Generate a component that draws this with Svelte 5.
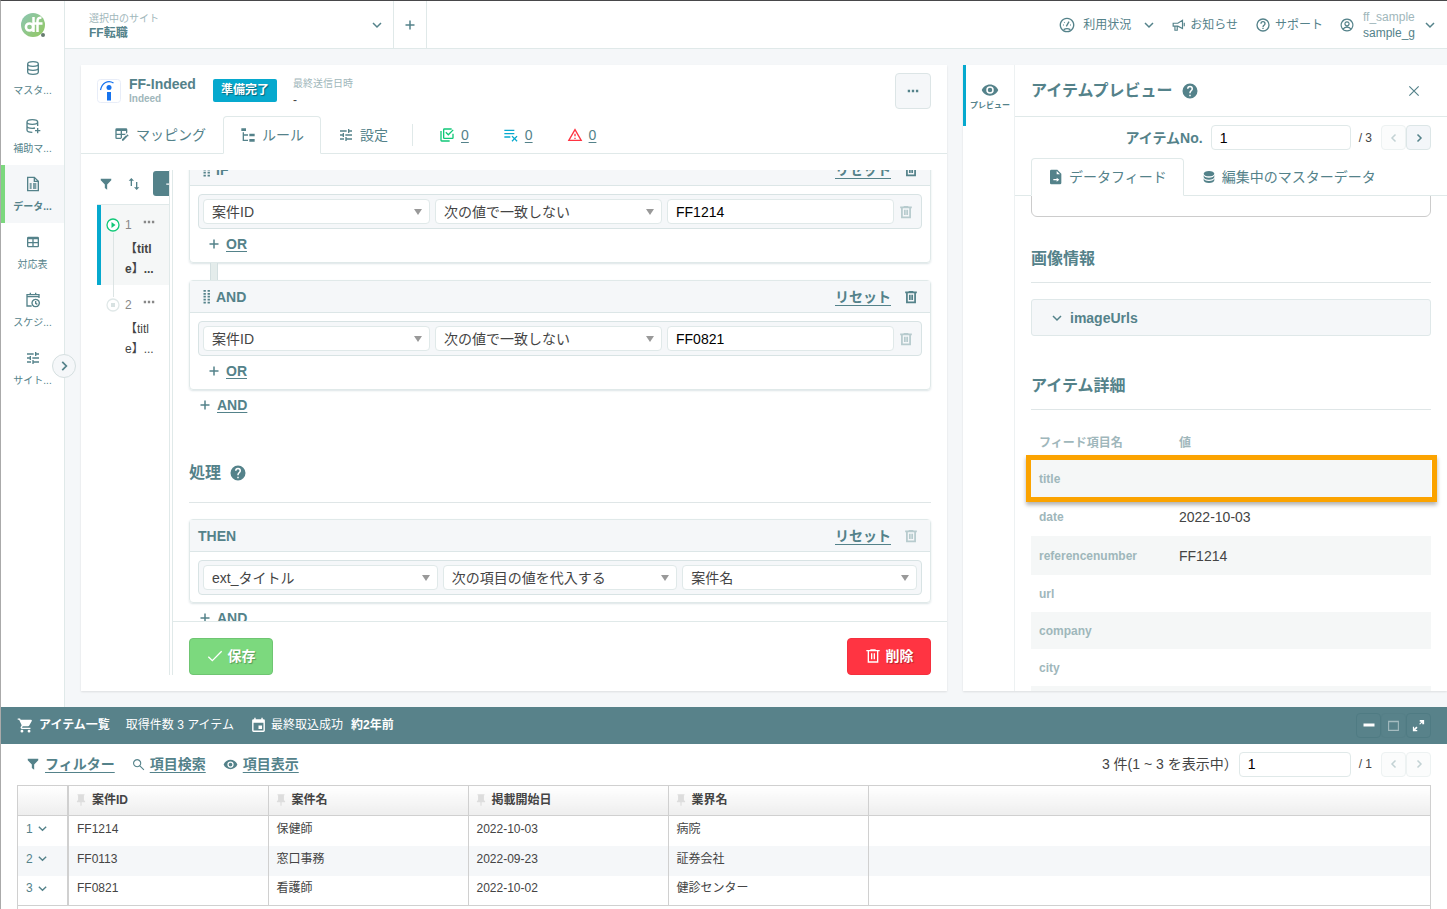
<script lang="ts">
  import { onMount } from "svelte";

  // filled 24x24 icons
  const filled: Record<string, string> = {
    database:
      "M12 3C7.58 3 4 4.79 4 7s3.58 4 8 4 8-1.79 8-4-3.58-4-8-4M4 9v3c0 2.21 3.58 4 8 4s8-1.79 8-4V9c0 2.21-3.58 4-8 4s-8-1.79-8-4m0 5v3c0 2.21 3.58 4 8 4s8-1.79 8-4v-3c0 2.21-3.58 4-8 4s-8-1.79-8-4z",
    eye: "M12 9a3 3 0 1 0 0 6 3 3 0 0 0 0-6m0 8a5 5 0 1 1 0-10 5 5 0 0 1 0 10m0-12.500C7 4.500 2.730 7.610 1 12c1.730 4.390 6 7.500 11 7.500s9.270-3.110 11-7.500C21.270 7.610 17 4.500 12 4.500z",
    tune: "M3 17v2h6v-2H3M3 5v2h10V5H3m10 16v-2h8v-2h-8v-2h-2v6h2M7 9v2H3v2h4v2h2V9H7m14 4v-2H11v2h10m-6-4h2V7h4V5h-4V3h-2v6z",
    filter: "M3 3h18v2.500L14 13v9l-4-3v-6L3 5.500z",
    help: "M15.070 11.250l-.9.920C13.450 12.890 13 13.500 13 15h-2v-.5c0-1.110.45-2.110 1.170-2.830l1.240-1.260C13.780 10.050 14 9.550 14 9a2 2 0 1 0-4 0H8a4 4 0 1 1 8 0c0 .88-.36 1.670-.93 2.250M13 19h-2v-2h2M12 2a10 10 0 1 0 0 20 10 10 0 0 0 0-20z",
    helpOutline:
      "M11 18h2v-2h-2v2m1-16a10 10 0 1 0 0 20 10 10 0 0 0 0-20m0 18a8 8 0 1 1 0-16 8 8 0 0 1 0 16m0-14a4 4 0 0 0-4 4h2a2 2 0 1 1 4 0c0 2-3 1.750-3 5h2c0-2.250 3-2.500 3-5a4 4 0 0 0-4-4z",
    cart: "M17 18a2 2 0 1 0 0 4 2 2 0 0 0 0-4M1 2v2h2l3.600 7.590-1.360 2.450A2 2 0 0 0 7 17h12v-2H7.420a.25.25 0 0 1-.22-.37L8.100 13h7.450c.75 0 1.410-.42 1.750-1.030l3.580-6.470A1 1 0 0 0 20 4H5.210l-.94-2M7 18a2 2 0 1 0 0 4 2 2 0 0 0 0-4z",
    calendar:
      "M19 19H5V8h14M16 1v2H8V1H6v2H5a2 2 0 0 0-2 2v14a2 2 0 0 0 2 2h14a2 2 0 0 0 2-2V5a2 2 0 0 0-2-2h-1V1m-1 11h-5v5h5v-5z",
    tree: "M2 2h7v4H2zM14 10h8v4h-8zM14 18h8v4h-8zM4 8h2v3h6v2H6v6h6v2H4z",
    alert: "M12 2L1 21h22M12 6l7.530 13H4.470M11 10v4h2v-4m-2 6v2h2v-2",
    listRemove:
      "M2 4v2h15V4H2m0 5v2h15V9H2m0 5v2h9v-2H2m12.200-1l-1.400 1.400 3.100 3.100-3.100 3.100 1.400 1.400 3.100-3.100 3.100 3.100 1.400-1.400-3.100-3.100 3.100-3.100L20.400 13l-3.100 3.100z",
    checks:
      "M20 16v-6h2v6a2 2 0 0 1-2 2H8a2 2 0 0 1-2-2V4a2 2 0 0 1 2-2h11v2H8v12h12M10.900 7.100l3.100 3.100 6.600-6.600L22 5l-8 8-4.500-4.500 1.400-1.400M16 20v2H4a2 2 0 0 1-2-2V6h2v14h12z",
    swap: "M8 3L4 7h3v8h2V7h3M17 17V9h-2v8h-3l4 4 4-4h-3z",
    pin: "M17 12V4h1V2H6v2h1v8l-2 2v2h6v6h2v-6h6v-2z",
    tableEdit:
      "M21.700 13.350l-1 1-2.050-2.050 1-1a.55.55 0 0 1 .77 0l1.280 1.280c.21.21.21.56 0 .77M12 18.420v2.080h2.060l6.060-6.080-2.050-2.050L12 18.420M4 2h14a2 2 0 0 1 2 2v4.170L16.170 12H12v4.170L10.170 18H4a2 2 0 0 1-2-2V4a2 2 0 0 1 2-2m0 4v4h6V6H4m8 0v4h6V6h-6m-8 6v4h6v-4H4z",
    table:
      "M5 4h14a2 2 0 0 1 2 2v12a2 2 0 0 1-2 2H5a2 2 0 0 1-2-2V6a2 2 0 0 1 2-2m0 4v4h6V8H5m8 0v4h6V8h-6m-8 6v4h6v-4H5m8 0v4h6v-4h-6z",
    expand:
      "M10 21v-2H7l3.500-3.500-2-2L5 17v-3H3v7h7m4.500-10.500l3.500-3.500v3h3V3h-7v3h2.500l-3.500 3.500z",
    fileMove: "M5 1h9l6 6v14a2 2 0 0 1-2 2H5a2 2 0 0 1-2-2V3a2 2 0 0 1 2-2m8 2v5h5zM8 15v2h5v2l4-3-4-3v2z",
    dots: "M3 10h4v4H3zM10 10h4v4h-4zM17 10h4v4h-4z",
    minimize: "M1 9h22v6H1z",
    grip: "M6 0h4v3H6zM13 0h4v3h-4zM6 5h4v3H6zM13 5h4v3h-4zM6 10h4v3H6zM13 10h4v3h-4zM6 15h4v3H6zM13 15h4v3h-4zM6 20h4v3H6zM13 20h4v3h-4z",
  };

  // stroked 24x24 icons
  const stroked: Record<string, string> = {
    databaseLine:
      "M4 6c0-2 3.500-3.500 8-3.500S20 4 20 6s-3.500 3.500-8 3.500S4 8 4 6zv12c0 2 3.500 3.500 8 3.500s8-1.500 8-3.500V6M4 12c0 2 3.500 3.500 8 3.500s8-1.500 8-3.500",
    databasePlus:
      "M3 6c0-2 3.500-3.500 8-3.500S19 4 19 6s-3.500 3.500-8 3.500S3 8 3 6zv12c0 2 3.500 3.500 8 3.500M19 6v6M3 12c0 2 3.500 3.500 8 3.500 1.500 0 3-.2 4-.5M19 15v8M15 19h8",
    fileTable: "M4 2h10l6 6v14H4zM14 2v6h6M7 12h3M12 12h5M7 15h3M12 15h5M7 18h3M12 18h5",
    calendarClock: "M10 21H3V4h18v5M3 7h18M8 1v4M16 1v4M16 11a5.500 5.500 0 1 0 .01 0zM16 13.500V17l2.500 1.500",
    down: "M4 8l8 8 8-8",
    left: "M15 5l-7 7 7 7",
    right: "M9 5l7 7-7 7",
    plus: "M12 3v18M3 12h18",
    close: "M4 4l16 16M20 4L4 20",
    check: "M2 13l6 6L22 5",
    search: "M9.500 3a6.500 6.500 0 1 0 .01 0zM14.500 14.500L22 22",
    trash: "M2 4h20M8 3h8M5 4v17h14V4M10 8v9M14 8v9",
    gauge: "M12 2a10 10 0 1 0 .01 0zM7 19c3-2 7-2 10 0M11 14l4-7M6 12h1M8 8l.5.5M17 12h1",
    horn: "M2 9h8l8-5v14l-8-4H2zM5 15v6h4v-6M21 8v6",
    user: "M12 2a10 10 0 1 0 .01 0zM12 6.500a3.500 3.500 0 1 0 .01 0zM5.500 18.500c3-4 10-4 13 0",
    maximize: "M3 4h18v17H3zM3 5h18",
  };

  const nav = [
    { icon: "databaseLine", label: "マスタ..." },
    { icon: "databasePlus", label: "補助マ..." },
    { icon: "fileTable", label: "データ...", active: true },
    { icon: "table", label: "対応表" },
    { icon: "calendarClock", label: "スケジ..." },
    { icon: "tune", label: "サイト..." },
  ];

  const tabs = [
    { icon: "tableEdit", label: "マッピング" },
    { icon: "tree", label: "ルール", active: true },
    { icon: "tune", label: "設定" },
  ];

  const counters = [
    { icon: "checks", kind: "ok", count: 0 },
    { icon: "listRemove", kind: "info", count: 0 },
    { icon: "alert", kind: "error", count: 0 },
  ];

  let conditions = $state([
    { id: "if", label: "IF", value: "FF1214" },
    { id: "and", label: "AND", value: "FF0821" },
  ]);

  const actions = [
    { label: "対象項目", value: "ext_タイトル" },
    { label: "処理方法", value: "次の項目の値を代入する" },
    { label: "代入元", value: "案件名" },
  ];

  const details = [
    { name: "title", value: "", marked: true },
    { name: "date", value: "2022-10-03" },
    { name: "referencenumber", value: "FF1214" },
    { name: "url", value: "" },
    { name: "company", value: "" },
    { name: "city", value: "" },
    { name: "", value: "" },
  ];

  const columns = ["案件ID", "案件名", "掲載開始日", "業界名"];
  const items = [
    ["FF1214", "保健師", "2022-10-03", "病院"],
    ["FF0113", "窓口事務", "2022-09-23", "証券会社"],
    ["FF0821", "看護師", "2022-10-02", "健診センター"],
  ];

  let itemNo = $state("1");
  let page = $state("1");
  let editor: HTMLElement;
  let preview: HTMLElement;

  onMount(() => {
    editor.scrollTop = 17;
    preview.scrollTop = 60;
  });
</script>

{#snippet icon(name: string, size = 16, weight = size < 14 ? 3 : 2)}
  <svg class="icon" width={size} height={size} viewBox="0 0 24 24" aria-hidden="true">
    {#if filled[name]}
      <path d={filled[name]} fill="currentColor" fill-rule="evenodd" />
    {:else}
      <path d={stroked[name]} fill="none" stroke="currentColor" stroke-width={weight} />
    {/if}
  </svg>
{/snippet}

{#snippet dropdown(label: string, value: string)}
  <span class="select">
    <select aria-label={label}><option>{value}</option></select>
  </span>
{/snippet}

<div class="app">
  <div class="upper">
    <nav class="sidebar">
      <a class="logo" href="#home" aria-label="ホーム">
        <svg width="26" height="26" viewBox="0 0 26 26">
          <defs>
            <linearGradient id="brand" x1="0" y1="0" x2="1" y2="1">
              <stop offset="0" stop-color="#8cc6b4" />
              <stop offset="1" stop-color="#93c860" />
            </linearGradient>
          </defs>
          <circle cx="12" cy="12" r="12" fill="url(#brand)" />
          <g fill="none" stroke="#fff" stroke-width="2.500">
            <circle cx="8.500" cy="14" r="3.600" />
            <path d="M12.500 4v15M16.500 19V8c0-2.500 1.500-3.500 4-3.200M12.500 10.500h9" />
          </g>
          <circle cx="22" cy="22" r="2" fill="#667b70" />
        </svg>
      </a>
      {#each nav as item}
        <a class="nav-item" class:active={item.active} href="#nav">
          {@render icon(item.icon, 16)}
          <span>{item.label}</span>
        </a>
      {/each}
      <button class="toggle" aria-label="メニューを開く">{@render icon("right", 14, 3)}</button>
    </nav>

    <div class="main">
      <header class="topbar">
        <button class="site">
          <span class="site-name">
            <small>選択中のサイト</small>
            <strong>FF転職</strong>
          </span>
          {@render icon("down", 12)}
        </button>
        <button class="add-site" aria-label="サイトを追加">{@render icon("plus", 12)}</button>
        <div class="menu">
          <a class="usage" href="#usage">{@render icon("gauge", 16)}<span>利用状況</span>{@render icon("down", 12)}</a>
          <a href="#news">{@render icon("horn", 14)}<span>お知らせ</span></a>
          <a href="#support">{@render icon("helpOutline", 16)}<span>サポート</span></a>
          <a class="account" href="#account">
            {@render icon("user", 14)}
            <span class="names"><small>ff_sample</small><b>sample_g</b></span>
            {@render icon("down", 12)}
          </a>
        </div>
      </header>

      <div class="workspace">
        <main class="panel feed">
          <div class="feed-head">
            <svg class="brand" width="24" height="24" viewBox="0 0 24 24" aria-hidden="true">
              <rect x=".5" y=".5" width="23" height="23" rx="3" fill="#fff" stroke="#e8edf8" />
              <path d="M3.500 11C5 4 11 .5 16.500 4" fill="none" stroke="#1673ee" stroke-width="1.200" />
              <circle cx="12" cy="8.500" r="2.500" fill="#1673ee" />
              <path d="M10 13h4v8.500h-4z" fill="#1673ee" />
            </svg>
            <div class="feed-name">
              <h1>FF-Indeed</h1>
              <small>Indeed</small>
            </div>
            <span class="badge">準備完了</span>
            <div class="sent">
              <small>最終送信日時</small>
              <span>-</span>
            </div>
            <button class="more" aria-label="その他">{@render icon("dots", 14)}</button>
          </div>

          <div class="tabs">
            {#each tabs as tab}
              <button class="tab" class:active={tab.active}>{@render icon(tab.icon, 16)}{tab.label}</button>
            {/each}
            <div class="counters">
              {#each counters as c}
                <a class={c.kind} href="#log">{@render icon(c.icon, 16)}<span>{c.count}</span></a>
              {/each}
            </div>
          </div>

          <div class="feed-body">
            <aside class="rules">
              <div class="rules-tools">
                <button aria-label="絞り込み">{@render icon("filter", 14)}</button>
                <button aria-label="並べ替え">{@render icon("swap", 16)}</button>
                <button class="add" aria-label="追加">{@render icon("plus", 10)}</button>
              </div>
              <ol>
                <li class="active">
                  <svg width="14" height="14" viewBox="0 0 14 14" aria-hidden="true">
                    <circle cx="7" cy="7" r="6" fill="#fff" stroke="#10c878" stroke-width="1.300" />
                    <path d="M5.500 4l4 3-4 3z" fill="#10c878" />
                  </svg>
                  <div class="rule">
                    <div class="rule-no">1 {@render icon("dots", 14)}</div>
                    <p>【titl<br />e】...</p>
                  </div>
                </li>
                <li>
                  <svg width="14" height="14" viewBox="0 0 14 14" aria-hidden="true">
                    <circle cx="7" cy="7" r="6" fill="#fff" stroke="#e0e8e8" stroke-width="1.300" />
                    <path d="M5 5h4v4H5z" fill="#d8e2e2" />
                  </svg>
                  <div class="rule">
                    <div class="rule-no">2 {@render icon("dots", 14)}</div>
                    <p>【titl<br />e】...</p>
                  </div>
                </li>
              </ol>
            </aside>

            <section class="editor">
              <div class="scroll" bind:this={editor}>
                {#each conditions as cond}
                  <div class="card linked">
                    <div class="card-head">
                      {@render icon("grip", 14)}
                      <h2>{cond.label}</h2>
                      <button class="link">リセット</button>
                      <button class="bin" aria-label="削除">{@render icon("trash", 14, 3)}</button>
                    </div>
                    <div class="row filter">
                      {@render dropdown("項目", "案件ID")}
                      {@render dropdown("条件", "次の値で一致しない")}
                      <input type="text" aria-label="値" bind:value={cond.value} />
                      <button class="bin" aria-label="条件を削除" disabled>{@render icon("trash", 14, 3)}</button>
                    </div>
                    <button class="append">{@render icon("plus", 12)}<span>OR</span></button>
                  </div>
                {/each}
                <button class="append">{@render icon("plus", 12)}<span>AND</span></button>

                <h2 class="heading">処理 {@render icon("help", 18)}</h2>

                <div class="card">
                  <div class="card-head">
                    <h2>THEN</h2>
                    <button class="link">リセット</button>
                    <button class="bin" aria-label="削除" disabled>{@render icon("trash", 14, 3)}</button>
                  </div>
                  <div class="row">
                    {#each actions as a}
                      {@render dropdown(a.label, a.value)}
                    {/each}
                  </div>
                </div>
                <button class="append">{@render icon("plus", 12)}<span>AND</span></button>
              </div>
              <footer>
                <button class="save">{@render icon("check", 16)}保存</button>
                <button class="delete">{@render icon("trash", 16)}削除</button>
              </footer>
            </section>
          </div>
        </main>

        <aside class="panel preview">
          <div class="strip">
            <button>{@render icon("eye", 18)}<span>プレビュー</span></button>
          </div>
          <div class="preview-main">
            <div class="preview-head">
              <h2>アイテムプレビュー {@render icon("help", 18)}</h2>
              <button aria-label="閉じる">{@render icon("close", 14)}</button>
            </div>
            <div class="pager item-pager">
              <label for="item-no">アイテムNo.</label>
              <input id="item-no" type="text" bind:value={itemNo} />
              <span>/ 3</span>
              <div class="steps">
                <button aria-label="前へ" disabled>{@render icon("left", 12)}</button>
                <button aria-label="次へ">{@render icon("right", 12)}</button>
              </div>
            </div>
            <div class="tabs">
              <button class="tab active">{@render icon("fileMove", 16)}データフィード</button>
              <button class="tab">{@render icon("database", 16)}編集中のマスターデータ</button>
            </div>
            <div class="scroll" bind:this={preview}>
              <div class="box"></div>
              <h3>画像情報</h3>
              <button class="accordion">{@render icon("down", 12)}imageUrls</button>
              <h3>アイテム詳細</h3>
              <table>
                <thead>
                  <tr><th class="name">フィード項目名</th><th>値</th></tr>
                </thead>
                <tbody>
                  {#each details as d}
                    <tr class:marked={d.marked} class:tall={d.value}>
                      <th>{d.name}</th>
                      <td>{d.value}</td>
                    </tr>
                  {/each}
                </tbody>
              </table>
            </div>
          </div>
        </aside>
      </div>
    </div>
  </div>

  <section class="items">
    <header>
      <h2>{@render icon("cart", 17)}アイテム一覧</h2>
      <span>取得件数 3 アイテム</span>
      <span class="imported">{@render icon("calendar", 17)}最終取込成功 <b>約2年前</b></span>
      <div class="window">
        <button aria-label="最小化">{@render icon("minimize", 12)}</button>
        <button aria-label="元に戻す" disabled>{@render icon("maximize", 13, 2)}</button>
        <button aria-label="最大化">{@render icon("expand", 15)}</button>
      </div>
    </header>
    <div class="tools">
      <button>{@render icon("filter", 14)}<span>フィルター</span></button>
      <button>{@render icon("search", 13, 2)}<span>項目検索</span></button>
      <button>{@render icon("eye", 15)}<span>項目表示</span></button>
      <div class="pager">
        <label for="page">3 件(1 ~ 3 を表示中）</label>
        <input id="page" type="text" bind:value={page} />
        <span>/ 1</span>
        <div class="steps">
          <button aria-label="前のページ" disabled>{@render icon("left", 12)}</button>
          <button aria-label="次のページ" disabled>{@render icon("right", 12)}</button>
        </div>
      </div>
    </div>
    <div class="grid">
      <table>
        <thead>
          <tr>
            <th class="no"></th>
            {#each columns as column}
              <th class="col"><span>{@render icon("pin", 14)}{column}</span></th>
            {/each}
            <th></th>
          </tr>
        </thead>
        <tbody>
          {#each items as row, i}
            <tr>
              <td class="no"><span>{i + 1}{@render icon("down", 11)}</span></td>
              {#each row as cell}
                <td>{cell}</td>
              {/each}
              <td></td>
            </tr>
          {/each}
        </tbody>
      </table>
    </div>
  </section>
</div>

<style>
  :global(body) {
    font-family: "Liberation Sans", "Noto Sans CJK JP", sans-serif;
    font-size: 14px;
    line-height: 20px;
    color: #444;
  }

  .app,
  .app :global(*) {
    box-sizing: border-box;
  }

  .app {
    --teal: #54828a;
    --pale: #9fb7bb;
    --line: #e0e9e9;
    --soft: #f5f7f9;
    --cyan: #06a9ce;

    display: flex;
    flex-direction: column;
    height: 100vh;
    overflow: hidden;
    border-top: 1px solid #48484a;
    border-left: 1px solid #aaa;
    background: #fff;
  }

  button,
  input,
  select {
    margin: 0;
    padding: 0;
    border: 0;
    background: none;
    font: inherit;
    color: inherit;
  }

  a,
  button {
    color: var(--teal);
    text-decoration: none;
  }

  h1,
  h2,
  h3,
  p,
  ol {
    margin: 0;
    padding: 0;
    list-style: none;
  }

  h2,
  h3 {
    color: var(--teal);
    font-size: 14px;
  }

  .icon {
    display: block;
    flex: none;
  }

  .upper {
    flex: 1;
    display: flex;
    min-height: 0;
  }

  /* sidebar */
  .sidebar {
    position: relative;
    flex: none;
    display: flex;
    flex-direction: column;
    width: 64px;
    border-right: 1px solid var(--line);
  }

  .logo {
    height: 48px;
    padding: 12px 0 0 20px;
  }

  .nav-item {
    display: flex;
    flex-direction: column;
    align-items: center;
    gap: 5px;
    height: 58px;
    padding-top: 11px;
    font-size: 10px;
    white-space: nowrap;
  }

  .nav-item.active {
    background: var(--soft);
    box-shadow: inset 4px 0 #7cd87e;
    font-weight: bold;
  }

  .toggle {
    position: absolute;
    top: 353px;
    right: -12px;
    z-index: 1;
    display: grid;
    place-items: center;
    width: 24px;
    height: 24px;
    border: 1px solid #d5dfe0;
    border-radius: 50%;
    background: var(--soft);
  }

  .main {
    flex: 1;
    display: flex;
    flex-direction: column;
    min-width: 0;
  }

  /* top bar */
  .topbar {
    flex: none;
    display: flex;
    height: 48px;
    border-bottom: 1px solid var(--line);
    font-size: 12px;
  }

  .site {
    display: flex;
    align-items: center;
    justify-content: space-between;
    width: 329px;
    padding: 0 10px 0 24px;
    border-right: 1px solid var(--line);
    text-align: left;
  }

  .site-name {
    display: flex;
    flex-direction: column;
    padding-top: 3px;
    line-height: 14px;
  }

  small {
    font-size: 10px;
    color: var(--pale);
  }

  .add-site {
    display: grid;
    place-items: center;
    width: 33px;
    border-right: 1px solid var(--line);
  }

  .menu {
    display: flex;
    align-items: center;
    gap: 17px;
    margin-left: auto;
    padding-right: 11px;
  }

  .menu a {
    display: flex;
    align-items: center;
    gap: 4px;
  }

  .menu .usage {
    gap: 8px;
  }

  .menu .usage :global(svg:last-child) {
    margin-left: 4px;
  }

  .menu .account {
    gap: 9px;
  }

  .names {
    display: flex;
    flex-direction: column;
    line-height: 16px;
  }

  .names small {
    font-size: 12px;
  }

  .names b {
    font-weight: normal;
  }

  /* workspace */
  .workspace {
    flex: 1;
    display: flex;
    gap: 16px;
    min-height: 0;
    padding: 16px 0 16px 16px;
    background: var(--soft);
  }

  .panel {
    display: flex;
    min-width: 0;
    background: #fff;
    box-shadow: 0 1px 2px rgba(0, 0, 0, 0.1);
  }

  .feed {
    flex: 1;
    flex-direction: column;
  }

  .feed-head {
    display: flex;
    align-items: flex-start;
    height: 50px;
    padding: 8px 16px 0;
  }

  .brand {
    margin: 6px 8px 0 0;
  }

  .feed-name {
    display: flex;
    flex-direction: column;
    padding-top: 3px;
    line-height: 14px;
    font-weight: bold;
  }

  h1 {
    font-size: 14px;
    line-height: 16px;
    color: var(--teal);
  }

  .badge {
    margin: 6px 16px 0 17px;
    padding: 0 8px;
    border-radius: 2px;
    background: var(--cyan);
    color: #fff;
    font-size: 12px;
    font-weight: bold;
    line-height: 23px;
    text-shadow: 1px 1px 1px rgba(0, 0, 0, 0.4);
  }

  .sent {
    display: flex;
    flex-direction: column;
    padding-top: 3px;
    font-size: 12px;
    line-height: 16px;
  }

  .more {
    display: grid;
    place-items: center;
    width: 36px;
    height: 36px;
    margin-left: auto;
    border: 1px solid #dce5e6;
    border-radius: 4px;
    background: var(--soft);
  }

  .tabs {
    flex: none;
    display: flex;
    height: 39px;
    padding: 1px 16px 0;
    box-shadow: inset 0 -1px var(--line);
  }

  .tab {
    display: flex;
    align-items: center;
    gap: 6px;
    padding: 0 16px;
    border: 1px solid transparent;
    white-space: nowrap;
  }

  .tab.active {
    border-color: var(--line);
    border-bottom-color: #fff;
    border-radius: 4px 4px 0 0;
    background: #fff;
  }

  .counters {
    display: flex;
    align-items: center;
    gap: 34px;
    height: 22px;
    margin: 8px 0 0 7px;
    padding-left: 26px;
    border-left: 1px solid var(--line);
  }

  .counters a {
    display: flex;
    align-items: center;
    gap: 6px;
  }

  .counters span {
    text-decoration: underline;
    text-underline-offset: 2px;
  }

  .ok :global(svg) {
    color: #10c878;
  }

  .info :global(svg) {
    color: var(--cyan);
  }

  .error :global(svg) {
    color: #ff3442;
  }

  .feed-body {
    flex: 1;
    display: flex;
    gap: 2px;
    min-height: 0;
    padding: 16px 0 16px 16px;
  }

  /* rule list */
  .rules {
    flex: none;
    width: 73px;
    overflow: hidden;
    border-right: 1px solid var(--line);
    font-size: 12px;
  }

  .rules-tools {
    display: flex;
    align-items: center;
    gap: 13px;
    height: 35px;
    padding: 1px 0 8px 2px;
    border-bottom: 1px solid var(--line);
  }

  .rules-tools .add {
    flex: none;
    display: grid;
    place-items: center;
    width: 34px;
    height: 25px;
    margin-left: -2px;
    border-radius: 3px;
    background: var(--teal);
    color: #fff;
  }

  .rules li {
    position: relative;
    display: flex;
    gap: 5px;
    height: 80px;
    padding: 10px 0 0 9px;
  }

  .rules li.active {
    background: #f5f7f7;
    box-shadow: inset 4px 0 var(--cyan);
    font-weight: bold;
  }

  .rules li > svg {
    flex: none;
    margin-top: 3px;
  }

  /* connector between the two rule marks */
  .rules li.active::before {
    content: "";
    position: absolute;
    top: 28px;
    left: 16px;
    height: 64px;
    border-left: 1px solid #dce4e4;
  }

  .rule-no {
    display: flex;
    gap: 10px;
    height: 24px;
    font-weight: normal;
    color: #888;
  }

  .rules p {
    white-space: nowrap;
  }

  /* rule editor */
  .editor {
    flex: 1;
    display: flex;
    flex-direction: column;
    min-width: 0;
    border-left: 1px solid var(--line);
  }

  .scroll {
    flex: 1;
    min-height: 0;
    overflow: hidden;
    padding: 0 16px;
  }

  .card {
    border: 1px solid var(--line);
    border-radius: 4px;
    box-shadow: 0 1px 2px rgba(80, 120, 130, 0.2);
  }

  .linked {
    position: relative;
    padding-bottom: 8px;
  }

  .linked + .linked {
    margin-top: 17px;
  }

  .linked + .linked::before {
    content: "";
    position: absolute;
    top: -18px;
    left: 20px;
    width: 6px;
    height: 17px;
    border: solid #d3dfe0;
    border-width: 0 1px;
    background: #e4eceb;
  }

  .card-head {
    display: flex;
    align-items: center;
    height: 32px;
    padding: 0 12px 0 8px;
    border-bottom: 1px solid #dce6e7;
    background: var(--soft);
    color: var(--teal);
  }

  .card-head > :global(svg) {
    margin: 0 2px;
  }

  .link {
    margin-left: auto;
    font-weight: bold;
    text-decoration: underline;
    text-underline-offset: 3px;
  }

  .bin {
    display: grid;
    place-items: center start;
  }

  .card-head .bin {
    margin-left: 13px;
  }

  .bin:disabled {
    color: #b7cbce;
  }

  .row {
    display: grid;
    grid-template-columns: repeat(3, minmax(0, 1fr));
    gap: 5px;
    margin: 8px 8px 7px;
    padding: 4px;
    border: 1px solid #d8e3e4;
    border-radius: 4px;
    background: var(--soft);
  }

  .row.filter {
    grid-template-columns: repeat(3, minmax(0, 1fr)) 18px;
    margin-bottom: 5px;
  }

  .select {
    position: relative;
    display: flex;
  }

  .select::after {
    content: "";
    position: absolute;
    top: 10px;
    right: 8px;
    border: 4px solid transparent;
    border-top: 6px solid #999;
    border-bottom: 0;
    pointer-events: none;
  }

  select {
    appearance: none;
    width: 100%;
  }

  select,
  input {
    height: 25px;
    padding: 0 8px;
    border: 1px solid var(--line);
    border-radius: 4px;
    background: #fff;
  }

  input {
    color: #000;
  }

  .append {
    display: flex;
    align-items: center;
    gap: 6px;
    padding-left: 18px;
    font-weight: bold;
  }

  .append span {
    text-decoration: underline;
    text-underline-offset: 2px;
  }

  .scroll > .append {
    margin: 5px 0 0;
    padding-left: 10px;
  }

  .heading {
    display: flex;
    align-items: center;
    gap: 8px;
    height: 47px;
    margin: 41px 0 16px;
    padding-bottom: 13px;
    border-bottom: 1px solid #dfe6e7;
    font-size: 16px;
  }

  footer {
    flex: none;
    display: flex;
    justify-content: space-between;
    padding: 16px 16px 0;
    border-top: 1px solid var(--line);
  }

  footer button {
    display: flex;
    align-items: center;
    justify-content: center;
    gap: 5px;
    width: 84px;
    height: 37px;
    border: 1px solid;
    border-radius: 4px;
    color: #fff;
    font-weight: bold;
    text-shadow: 1px 1px 1px rgba(0, 0, 0, 0.3);
  }

  .save {
    border-color: #6fc572;
    background: #7cd97e;
  }

  .delete {
    border-color: #f5303e;
    background: #ff3442;
  }

  /* preview */
  .preview {
    flex: none;
    width: 484px;
  }

  .strip {
    flex: none;
    width: 52px;
    border-right: 1px solid #edf1f2;
  }

  .strip button {
    display: flex;
    flex-direction: column;
    align-items: center;
    width: 100%;
    height: 61px;
    padding-top: 16px;
    border-left: 3px solid var(--cyan);
    font-size: 8px;
    font-weight: bold;
    line-height: 14px;
  }

  .preview-main {
    flex: 1;
    display: flex;
    flex-direction: column;
    min-width: 0;
  }

  .preview-head {
    flex: none;
    display: flex;
    align-items: center;
    justify-content: space-between;
    height: 52px;
    padding: 0 26px 0 16px;
    border-bottom: 1px solid var(--line);
  }

  .preview-head h2 {
    display: flex;
    align-items: center;
    gap: 9px;
    font-size: 16px;
  }

  .pager {
    display: flex;
    align-items: center;
    justify-content: flex-end;
    gap: 8px;
    padding-right: 16px;
  }

  .pager span {
    font-size: 12px;
  }

  .item-pager {
    padding-top: 8px;
  }

  .item-pager label {
    font-weight: bold;
    color: var(--teal);
  }

  .pager input {
    width: 112px;
  }

  .item-pager input {
    width: 140px;
  }

  .steps {
    display: flex;
    margin-left: 1px;
  }

  .steps button {
    display: grid;
    place-items: center;
    width: 25px;
    height: 25px;
    border: 1px solid #dce6e7;
    border-radius: 4px;
    background: #f3f6f9;
  }

  .steps button:disabled {
    border-color: #edf2f2;
    background: #fbfcfc;
    color: #c3d2d4;
  }

  .preview .tabs {
    height: 46px;
    padding-top: 8px;
  }

  .preview .tab {
    gap: 5px;
  }

  .box {
    height: 81px;
    border: 1px solid #ccc;
    border-radius: 6px;
  }

  h3 {
    height: 50px;
    margin: 16px 0;
    padding-top: 16px;
    border-bottom: 1px solid #dfe6e7;
    font-size: 16px;
  }

  .accordion {
    display: flex;
    align-items: center;
    gap: 7px;
    width: 100%;
    height: 37px;
    padding-left: 19px;
    border: 1px solid #dfe8e9;
    border-radius: 3px;
    background: var(--soft);
    font-weight: bold;
  }

  .accordion + h3 {
    margin-top: 24px;
  }

  table {
    width: 100%;
    border-collapse: collapse;
    table-layout: fixed;
    text-align: left;
  }

  .preview th {
    padding: 0 8px;
    color: var(--pale);
    font-size: 12px;
  }

  .preview .name {
    width: 140px;
  }

  .preview th,
  .preview td {
    white-space: nowrap;
  }

  .preview td {
    padding: 0 8px;
  }

  .preview tr {
    height: 37px;
  }

  .preview tr.tall {
    height: 39px;
  }

  .preview thead tr {
    height: 34px;
  }

  .preview tbody tr:nth-child(odd) {
    background: #f5f7f7;
  }

  .marked {
    position: relative;
  }

  .marked td::after {
    content: "";
    position: absolute;
    inset: -5px -6px -5px -5px;
    border: 5px solid #fba300;
    box-shadow: 0 3px 4px rgba(0, 0, 0, 0.3);
  }

  /* item list */
  .items > header {
    display: flex;
    align-items: center;
    height: 37px;
    padding: 0 16px;
    background: #58828a;
    color: #fff;
    font-size: 12px;
  }

  .items h2 {
    display: flex;
    align-items: center;
    gap: 5px;
    margin-right: 16px;
    color: #fff;
    font-size: 12px;
  }

  .imported {
    display: flex;
    align-items: center;
    gap: 4px;
    margin-left: 16px;
  }

  .imported b {
    margin-left: 4px;
  }

  .window {
    display: flex;
    margin-left: auto;
  }

  .window button {
    display: grid;
    place-items: center;
    width: 25px;
    height: 25px;
    border: 1px solid #4f7b83;
    border-radius: 4px;
    color: #fff;
  }

  .window button:disabled {
    border-color: #557f87;
    color: #a5bcc0;
  }

  .tools {
    display: flex;
    align-items: center;
    gap: 17px;
    height: 41px;
    padding-left: 25px;
  }

  .tools > button {
    display: flex;
    align-items: center;
    gap: 5px;
    font-weight: bold;
  }

  .tools > button span {
    text-decoration: underline;
    text-underline-offset: 3px;
  }

  .tools .pager {
    margin-left: auto;
  }

  /* half-width brackets */
  .tools label {
    font-feature-settings: "halt";
  }

  .grid {
    margin: 0 16px;
    padding-bottom: 3px;
    border: solid #d0d0d0;
    border-width: 1px 1px 0;
    font-size: 12px;
  }

  .grid th {
    height: 30px;
    padding: 0 8px;
    border-right: 1px solid #d0d0d0;
    border-bottom: 1px solid #d0d0d0;
    background: linear-gradient(#fff, #eee);
  }

  .grid th:last-child,
  .grid td:last-child {
    border-right: 0;
  }

  .grid .col {
    width: 200px;
  }

  .grid th span,
  .grid td span {
    display: flex;
    align-items: center;
    gap: 4px;
  }

  .grid .col span {
    margin-left: -3px;
  }

  .grid th :global(svg) {
    color: #ddd;
  }

  .grid td {
    height: 30px;
    padding: 0 8px 4px;
    border-right: 1px solid #d0d0d0;
  }

  .grid .no {
    width: 50px;
    border-right: 2px solid #d0d0d0;
    color: var(--teal);
  }

  .grid tbody tr:nth-child(even) {
    background: var(--soft);
  }

  .grid tbody tr:last-child {
    border-bottom: 1px solid #d0d0d0;
  }
</style>
